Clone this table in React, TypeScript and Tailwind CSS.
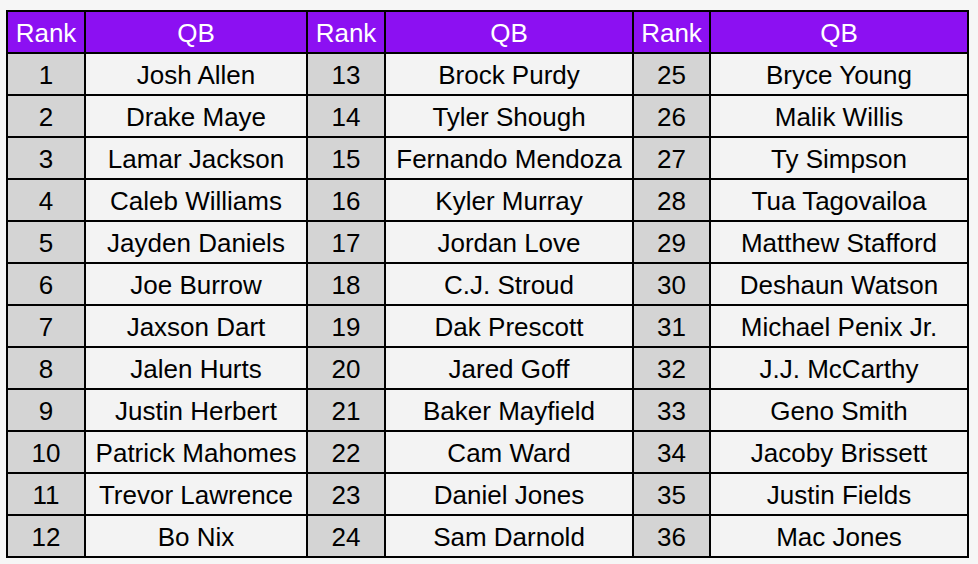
import React from "react";

const names = [
  "Josh Allen", "Drake Maye", "Lamar Jackson", "Caleb Williams", "Jayden Daniels", "Joe Burrow",
  "Jaxson Dart", "Jalen Hurts", "Justin Herbert", "Patrick Mahomes", "Trevor Lawrence", "Bo Nix",
  "Brock Purdy", "Tyler Shough", "Fernando Mendoza", "Kyler Murray", "Jordan Love", "C.J. Stroud",
  "Dak Prescott", "Jared Goff", "Baker Mayfield", "Cam Ward", "Daniel Jones", "Sam Darnold",
  "Bryce Young", "Malik Willis", "Ty Simpson", "Tua Tagovailoa", "Matthew Stafford", "Deshaun Watson",
  "Michael Penix Jr.", "J.J. McCarthy", "Geno Smith", "Jacoby Brissett", "Justin Fields", "Mac Jones",
];

const cell = "border-2 border-black text-center h-[42px] p-0 pt-[2px] leading-none";

export default function App() {
  return (
    <div className="w-[978px] h-[564px] bg-[#f6f6f6] pt-[10px] pl-[6px]">
      <table
        className="table-fixed border-collapse text-[26px] text-black"
        style={{ fontFamily: '"Liberation Sans", Arial, sans-serif' }}
      >
        <colgroup>
          <col className="w-[78px]" />
          <col className="w-[222px]" />
          <col className="w-[78px]" />
          <col className="w-[248px]" />
          <col className="w-[77px]" />
          <col className="w-[258px]" />
        </colgroup>
        <thead>
          <tr className="bg-[#8c10f2] text-white">
            {[0, 1, 2].map((g) => (
              <React.Fragment key={g}>
                <th className={`${cell} font-normal`}>Rank</th>
                <th className={`${cell} font-normal`}>QB</th>
              </React.Fragment>
            ))}
          </tr>
        </thead>
        <tbody>
          {Array.from({ length: 12 }, (_, r) => (
            <tr key={r}>
              {[0, 1, 2].map((g) => {
                const i = g * 12 + r;
                return (
                  <React.Fragment key={g}>
                    <td className={`${cell} bg-[#d4d4d4]`}>{i + 1}</td>
                    <td className={`${cell} bg-[#f3f3f3] whitespace-nowrap`}>{names[i]}</td>
                  </React.Fragment>
                );
              })}
            </tr>
          ))}
        </tbody>
      </table>
    </div>
  );
}
